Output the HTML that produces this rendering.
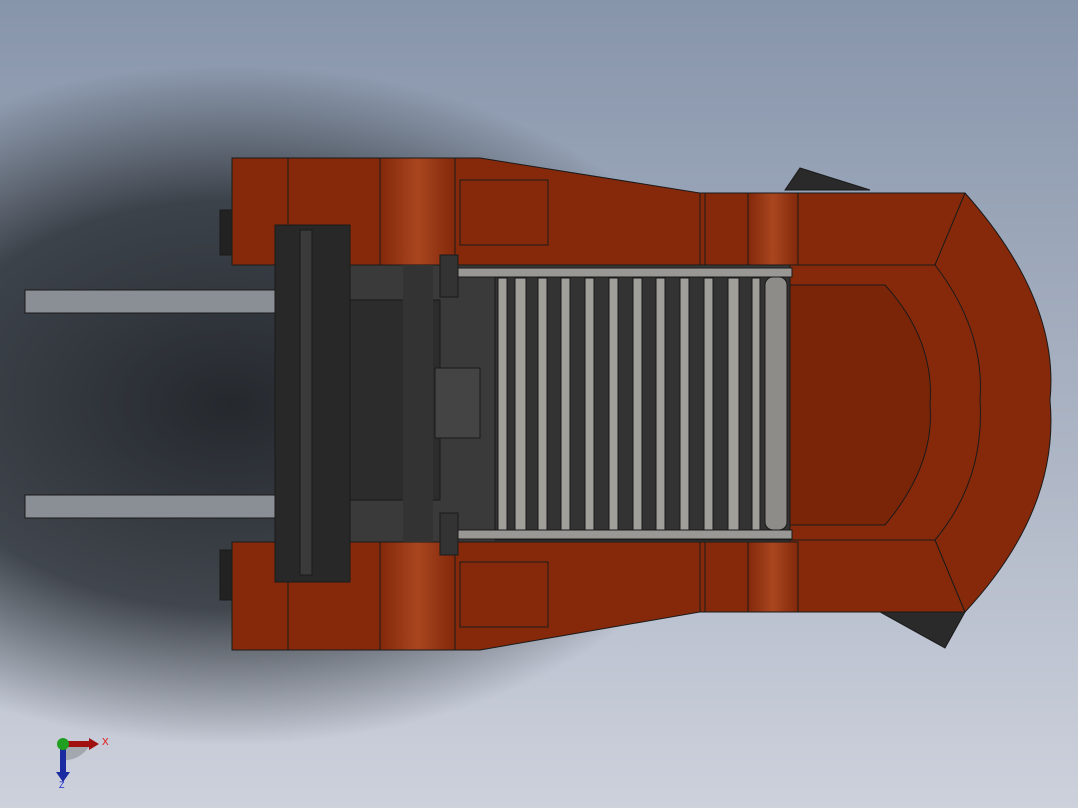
<!DOCTYPE html>
<html><head><style>
html,body{margin:0;padding:0;width:1078px;height:808px;overflow:hidden}
</style></head><body>
<svg width="1078" height="808" viewBox="0 0 1078 808" xmlns="http://www.w3.org/2000/svg" style="display:block">
<defs>
<linearGradient id="bg" x1="0" y1="0" x2="0" y2="1">
<stop offset="0" stop-color="#8795ab"/><stop offset="0.5" stop-color="#a9b2c2"/><stop offset="1" stop-color="#cdd1dc"/>
</linearGradient>
<radialGradient id="sh" cx="0.5" cy="0.5" r="0.5">
<stop offset="0" stop-color="#25292e" stop-opacity="1"/><stop offset="0.6" stop-color="#2c3137" stop-opacity="0.85"/><stop offset="1" stop-color="#2c3137" stop-opacity="0"/>
</radialGradient>
<linearGradient id="hl" x1="0" y1="0" x2="1" y2="0">
<stop offset="0" stop-color="#82280a"/><stop offset="0.5" stop-color="#a9461f"/><stop offset="1" stop-color="#82280a"/>
</linearGradient>
</defs>
<rect width="1078" height="808" fill="url(#bg)"/>
<ellipse cx="230" cy="405" rx="520" ry="340" fill="url(#sh)"/>
<g stroke="#1a1a1a" stroke-width="1">
<rect x="25" y="290" width="275" height="23" fill="#8a8f95"/>
<rect x="25" y="495" width="275" height="23" fill="#8a8f95"/>
<path d="M785 190 L800 168 L870 190Z" fill="#2a2a2a"/>
<path d="M880 612 L945 648 L965 612Z" fill="#2a2a2a"/>
<path d="M232 158 L480 158 L700 193 L700 265 L232 265Z" fill="#85290a"/>
<path d="M232 542 L700 542 L700 612 L480 650 L232 650Z" fill="#85290a"/>
<rect x="380" y="158" width="75" height="107" fill="url(#hl)"/>
<rect x="380" y="542" width="75" height="108" fill="url(#hl)"/>
<rect x="460" y="180" width="88" height="65" fill="#85290a"/>
<rect x="460" y="562" width="88" height="65" fill="#85290a"/>
<line x1="288" y1="158" x2="288" y2="265"/><line x1="288" y1="542" x2="288" y2="650"/>
<path d="M700 193 L965 193 Q1060 300 1050 400 Q1060 510 965 612 L700 612Z" fill="#85290a"/>
<path d="M790 265 L935 265 Q985 330 980 400 Q985 480 935 540 L790 540Z" fill="#85290a"/>
<path d="M790 285 L885 285 Q935 340 930 405 Q935 465 885 525 L790 525Z" fill="#7a2408"/>
<line x1="935" y1="265" x2="965" y2="193"/><line x1="935" y1="540" x2="965" y2="612"/>
<rect x="748" y="193" width="50" height="72" fill="url(#hl)"/>
<rect x="748" y="542" width="50" height="70" fill="url(#hl)"/>
<line x1="705" y1="193" x2="705" y2="265"/><line x1="705" y1="542" x2="705" y2="612"/>
<rect x="290" y="265" width="500" height="277" fill="#3a3a3a"/>
<rect x="350" y="300" width="90" height="200" fill="#2c2c2c"/>
<rect x="435" y="368" width="45" height="70" fill="#444"/>
<rect x="403" y="265" width="30" height="277" fill="#333" stroke="none"/>
<rect x="275" y="225" width="75" height="357" fill="#282828"/>
<rect x="300" y="230" width="12" height="345" fill="#3a3a3a"/>
<rect x="220" y="210" width="12" height="45" fill="#222"/>
<rect x="220" y="550" width="12" height="50" fill="#222"/>
<rect x="495" y="268" width="295" height="272" fill="#333"/>
<rect x="440" y="268" width="352" height="9" fill="#9a9894"/>
<rect x="440" y="530" width="352" height="9" fill="#9a9894"/>
<rect x="765" y="277" width="22" height="253" rx="8" fill="#8e8c88"/>
<g fill="#a19f9a">
<rect x="498" y="278" width="9" height="252"/><rect x="515" y="278" width="11" height="252"/>
<rect x="538" y="278" width="9" height="252"/><rect x="561" y="278" width="9" height="252"/>
<rect x="585" y="278" width="9" height="252"/><rect x="609" y="278" width="9" height="252"/>
<rect x="633" y="278" width="9" height="252"/><rect x="656" y="278" width="9" height="252"/>
<rect x="680" y="278" width="9" height="252"/><rect x="704" y="278" width="9" height="252"/>
<rect x="728" y="278" width="11" height="252"/><rect x="752" y="278" width="8" height="252"/>
</g>
<rect x="440" y="255" width="18" height="42" fill="#333"/>
<rect x="440" y="513" width="18" height="42" fill="#333"/>
</g>
<path d="M60 760 A30 30 0 0 0 90 745 L64 745Z" fill="#8a8d92" opacity="0.6"/>
<rect x="65" y="741" width="24" height="6" fill="#a01010"/>
<path d="M89 738 L99 744 L89 750Z" fill="#a01010"/>
<rect x="60" y="745" width="6" height="28" fill="#1a2aa0"/>
<path d="M56 772 L63 782 L70 772Z" fill="#1a2aa0"/>
<circle cx="63" cy="744" r="6" fill="#20a020"/>
<text x="102" y="745" font-family="Liberation Sans,sans-serif" font-size="10" fill="#e01010">X</text>
<text x="59" y="788" font-family="Liberation Sans,sans-serif" font-size="9" fill="#1a2ad0">Z</text>
</svg>
</body></html>
